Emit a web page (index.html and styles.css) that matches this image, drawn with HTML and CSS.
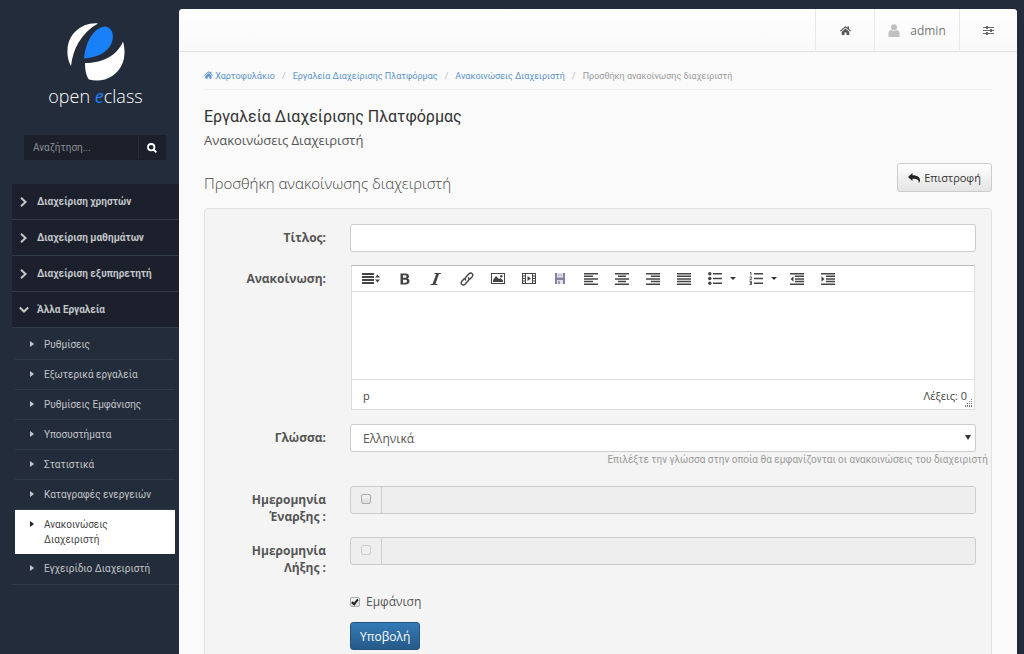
FILE: index.html
```html
<!DOCTYPE html>
<html lang="el">
<head>
<meta charset="utf-8">
<meta name="viewport" content="width=device-width, initial-scale=1">
<title>Ανακοινώσεις Διαχειριστή</title>
<link rel="stylesheet" href="styles.css">
</head>
<body>
<div class="layout">
  <aside class="sidebar">
    <a class="brand" href="#">
      <svg class="brand-mark" viewBox="0 0 58 58" aria-hidden="true">
        <path fill="#fff" d="M31 0.500C15-1 1 11 0.500 27 0 33 1.500 39 4 43 6 26 14 10 31 0.500Z"/>
        <path fill="#1a80f8" d="M17 35.500C18 22 25 5 38 3.500 44 4 47 10 45.500 17 43 28 33 34 17 35.500Z"/>
        <path fill="#fff" d="M18 40C35 40 50 33 56 18.500 60 33 56 45 46 52.500 38 58 29 58.500 22 56.500 19 53 18 46 18 40Z"/>
      </svg>
      <span class="brand-name">open <em>e</em>class</span>
    </a>
    <form class="search">
      <input class="search-input" type="text" placeholder="Αναζήτηση..." aria-label="Αναζήτηση">
      <button class="search-button" type="button" aria-label="Αναζήτηση">
        <svg width="10" height="10" viewBox="0 0 10 10" fill="none" stroke="#fff" stroke-width="1.800"><circle cx="4.200" cy="4.200" r="3.200"/><path d="M6.500 6.500l2.900 2.900"/></svg>
      </button>
    </form>
    <nav class="menu">
      <a class="menu-group" href="#"><svg class="chevron" viewBox="0 0 10 10"><path d="M2 0.800l4.500 4.200L2 9.200"/></svg>Διαχείριση χρηστών</a>
      <a class="menu-group" href="#"><svg class="chevron" viewBox="0 0 10 10"><path d="M2 0.800l4.500 4.200L2 9.200"/></svg>Διαχείριση μαθημάτων</a>
      <a class="menu-group" href="#"><svg class="chevron" viewBox="0 0 10 10"><path d="M2 0.800l4.500 4.200L2 9.200"/></svg>Διαχείριση εξυπηρετητή</a>
      <a class="menu-group" href="#"><svg class="chevron" viewBox="0 0 10 10"><path d="M0.800 2.500L5 6.500l4.200-4"/></svg>Άλλα Εργαλεία</a>
      <ul class="submenu">
        <li><a class="submenu-link" href="#">Ρυθμίσεις</a></li>
        <li><a class="submenu-link" href="#">Εξωτερικά εργαλεία</a></li>
        <li><a class="submenu-link" href="#">Ρυθμίσεις Εμφάνισης</a></li>
        <li><a class="submenu-link" href="#">Υποσυστήματα</a></li>
        <li><a class="submenu-link" href="#">Στατιστικά</a></li>
        <li><a class="submenu-link" href="#">Καταγραφές ενεργειών</a></li>
        <li><a class="submenu-link active" href="#" aria-current="page">Ανακοινώσεις Διαχειριστή</a></li>
        <li><a class="submenu-link" href="#">Εγχειρίδιο Διαχειριστή</a></li>
      </ul>
    </nav>
  </aside>

  <div class="page">
    <header class="topbar">
      <a class="top-item top-home" href="#" aria-label="Αρχική">
        <svg width="11" height="9" viewBox="0 0 22 18" fill="#555"><path d="M11 0L0 9.500l1.500 1.500L11 3l9.500 8 1.500-1.500-4-3.500V1h-3v2.500z"/><path d="M11 5l-7.500 6.300V18H9v-5h4v5h5.500v-6.700z"/></svg>
      </a>
      <a class="top-item top-user" href="#">
        <svg width="12" height="13" viewBox="0 0 13 14" fill="#c0c0c0"><circle cx="6.500" cy="3.600" r="3.300"/><path d="M0.500 14v-4c0-2 1.200-3.300 3-3.500 2 1.300 4 1.300 6 0 1.800 0.200 3 1.500 3 3.500v4z"/></svg>
        admin
      </a>
      <a class="top-item top-settings" href="#" aria-label="Ρυθμίσεις">
        <svg width="11" height="9" viewBox="0 0 11 9" fill="#666"><path d="M0 1h11v1H0zM0 4h11v1H0zM0 7h11v1H0z"/><path d="M3 0h2v3H3zM7 3h2v3H7zM3 6h2v3H3z"/></svg>
      </a>
    </header>

    <main class="content">
      <ol class="breadcrumb">
        <li><a href="#"><svg width="9" height="8" viewBox="0 0 22 18" fill="currentColor" aria-hidden="true"><path d="M11 0L0 9.500l1.500 1.500L11 3l9.500 8 1.500-1.500-4-3.500V1h-3v2.500z"/><path d="M11 5l-7.500 6.300V18H9v-5h4v5h5.500v-6.700z"/></svg> Χαρτοφυλάκιο</a></li>
        <li><a href="#">Εργαλεία Διαχείρισης Πλατφόρμας</a></li>
        <li><a href="#">Ανακοινώσεις Διαχειριστή</a></li>
        <li>Προσθήκη ανακοίνωσης διαχειριστή</li>
      </ol>
      <h1 class="title">Εργαλεία Διαχείρισης Πλατφόρμας</h1>
      <p class="subtitle">Ανακοινώσεις Διαχειριστή</p>
      <div class="action-row">
        <h2 class="section-title">Προσθήκη ανακοίνωσης διαχειριστή</h2>
        <a class="button-default" href="#">
          <svg width="12" height="10" viewBox="0 0 12 10" fill="#222" aria-hidden="true"><path d="M4.500 0v2.300C9.500 2.300 12 4.500 12 7c0 1.200-0.500 2.300-1.300 3 0.500-3-1.700-4.300-6.200-4.200v2.300L0 4z"/></svg>
          Επιστροφή
        </a>
      </div>

      <form class="panel">
        <div class="row row-title">
          <label class="label" for="title">Τίτλος:</label>
          <input class="field" id="title" type="text">
        </div>
        <div class="row row-editor">
          <label class="label" for="body">Ανακοίνωση:</label>
          <div class="editor">
            <div class="toolbar">
              <button class="tool tool-format" type="button" aria-label="Μορφή"><svg width="18" height="11" viewBox="0 0 18 11"><path d="M0 0h12v2H0zM0 3h12v2H0zM0 6h12v2H0zM0 9h12v2H0zM13 4.500l2.500-3 2.500 3zM13 6.500l2.500 3 2.500-3z"/></svg></button>
              <button class="tool" type="button" aria-label="Έντονα"><svg width="10" height="12" viewBox="0 0 10 12" fill-rule="evenodd"><path d="M0.500 0.500h5C8 0.500 9 1.800 9 3.200 9 4.500 8.200 5.300 7.400 5.600 8.800 5.900 9.500 7 9.500 8.300c0 1.900-1.300 3.200-4 3.200h-5zM3 2.300v2.500h2c1 0 1.500-0.500 1.500-1.300S6 2.300 5 2.300zM3 6.700v3h2.200c1.200 0 1.800-0.600 1.800-1.500s-0.600-1.500-1.800-1.500z"/></svg></button>
              <button class="tool" type="button" aria-label="Πλάγια"><svg width="11" height="12" viewBox="0 0 11 12"><path d="M4.500 0H11l-0.200 1H9L5.500 11h2l-0.200 1H0.500l0.200-1h1.800L6.200 1H4.300z"/></svg></button>
              <button class="tool" type="button" aria-label="Σύνδεσμος"><svg class="stroked" width="14" height="14" viewBox="0 0 14 14"><path d="M6 8.500C4.500 7 5 6 6 5l3-3.200c1.200-1.200 2.300-1 3.200-0.100s0.900 2-0.200 3.200L9.500 7.500M8 5.500C9.500 7 9 8 8 9l-3 3.200c-1.200 1.200-2.300 1-3.200 0.100s-0.900-2 0.200-3.200L4.500 6.500"/></svg></button>
              <button class="tool" type="button" aria-label="Εικόνα"><svg width="14" height="11" viewBox="0 0 14 11" fill-rule="evenodd"><path d="M0 0h14v11H0zM1 1v9h12V1z"/><path d="M2 9V7l3-4 3 3 1.500-1L12 7.500V9z"/><circle cx="10.300" cy="3.200" r="1.200"/></svg></button>
              <button class="tool" type="button" aria-label="Βίντεο"><svg width="14" height="11" viewBox="0 0 14 11" fill-rule="evenodd"><path d="M0 0h14v11H0zM4 1v9h6V1zM1 1v1.500h2V1zM1 3.500V5h2V3.500zM1 6v1.500h2V6zM1 8.500V10h2V8.500zM11 1v1.500h2V1zM11 3.500V5h2V3.500zM11 6v1.500h2V6zM11 8.500V10h2V8.500z"/><path d="M5.500 3l3.500 2.500L5.500 8z"/></svg></button>
              <button class="tool" type="button" aria-label="Αποθήκευση"><svg width="10" height="11" viewBox="0 0 10 11"><path fill="#8484a0" d="M0 0h10v11H0z"/><path fill="#e2e2ec" d="M2 0h6v4.500H2zM2 7h6v4H2z"/><path fill="#a0a0b4" d="M3 8h2v3H3zM3 1.500h4v1H3z"/></svg></button>
              <button class="tool" type="button" aria-label="Αριστερά"><svg width="14" height="12" viewBox="0 0 14 12"><path d="M0 0h14v1.500H0zM0 2.600h9v1.500H0zM0 5.200h14v1.500H0zM0 7.800h9v1.500H0zM0 10.400h14v1.500H0z"/></svg></button>
              <button class="tool" type="button" aria-label="Κέντρο"><svg width="14" height="12" viewBox="0 0 14 12"><path d="M0 0h14v1.500H0zM3 2.600h8v1.500H3zM0 5.200h14v1.500H0zM3 7.800h8v1.500H3zM0 10.400h14v1.500H0z"/></svg></button>
              <button class="tool" type="button" aria-label="Δεξιά"><svg width="14" height="12" viewBox="0 0 14 12"><path d="M0 0h14v1.500H0zM5 2.600h9v1.500H5zM0 5.200h14v1.500H0zM5 7.800h9v1.500H5zM0 10.400h14v1.500H0z"/></svg></button>
              <button class="tool" type="button" aria-label="Πλήρης στοίχιση"><svg width="14" height="12" viewBox="0 0 14 12"><path d="M0 0h14v1.500H0zM0 2.600h14v1.500H0zM0 5.200h14v1.500H0zM0 7.800h14v1.500H0zM0 10.400h14v1.500H0z"/></svg></button>
              <button class="tool tool-list" type="button" aria-label="Λίστα"><svg width="14" height="13" viewBox="0 0 14 13"><circle cx="1.800" cy="1.800" r="1.700"/><circle cx="1.800" cy="6.500" r="1.700"/><circle cx="1.800" cy="11.200" r="1.700"/><path d="M5 1h9v1.500H5zM5 5.700h9v1.500H5zM5 10.500h9V12H5z"/></svg><span class="caret"></span></button>
              <button class="tool tool-list" type="button" aria-label="Αρίθμηση"><svg width="14" height="13" viewBox="0 0 14 13"><path d="M5 1h9v1.500H5zM5 5.700h9v1.500H5zM5 10.500h9V12H5z"/><path fill="none" stroke="#444" stroke-width="0.900" d="M0.800 0.500H2v3M0.500 5h2v1.200l-1.700 1.500h2M0.500 9.400h2v1.500H1h1.500v1.600h-2"/></svg><span class="caret"></span></button>
              <button class="tool" type="button" aria-label="Μείωση εσοχής"><svg width="14" height="12" viewBox="0 0 14 12"><path d="M0 0h14v1.500H0zM5 2.600h9v1.500H5zM5 5.200h9v1.500H5zM5 7.800h9v1.500H5zM0 10.400h14v1.500H0zM3.500 3.300v5.400L0.500 6z"/></svg></button>
              <button class="tool" type="button" aria-label="Αύξηση εσοχής"><svg width="14" height="12" viewBox="0 0 14 12"><path d="M0 0h14v1.500H0zM5 2.600h9v1.500H5zM5 5.200h9v1.500H5zM5 7.800h9v1.500H5zM0 10.400h14v1.500H0zM0.500 3.300v5.400l3-2.700z"/></svg></button>
            </div>
            <textarea class="editor-area" id="body"></textarea>
            <div class="statusbar">
              <span>p</span><span>Λέξεις: 0</span>
              <svg class="grip" width="9" height="9" viewBox="0 0 9 9" fill="#777"><path d="M7 0h1v1H7zM5 2h1v1H5zM7 2h1v1H7zM3 4h1v1H3zM5 4h1v1H5zM7 4h1v1H7zM1 6h1v2H1zM3 6h1v2H3zM5 6h1v2H5zM7 6h1v2H7z"/></svg>
            </div>
          </div>
        </div>
        <div class="row row-language">
          <label class="label" for="lang">Γλώσσα:</label>
          <div>
            <div class="select-wrap"><select class="field select" id="lang"><option>Ελληνικά</option></select></div>
            <p class="help">Επιλέξτε την γλώσσα στην οποία θα εμφανίζονται οι ανακοινώσεις του διαχειριστή</p>
          </div>
        </div>
        <div class="row row-date">
          <label class="label" for="start">Ημερομηνία Έναρξης :</label>
          <div class="date-group">
            <span class="addon"><input class="check" type="checkbox" aria-label="Ενεργοποίηση ημερομηνίας έναρξης"></span>
            <input class="date-input" id="start" type="text" disabled>
          </div>
        </div>
        <div class="row row-date">
          <label class="label" for="end">Ημερομηνία Λήξης :</label>
          <div class="date-group">
            <span class="addon"><input class="check" type="checkbox" disabled aria-label="Ενεργοποίηση ημερομηνίας λήξης"></span>
            <input class="date-input" id="end" type="text" disabled>
          </div>
        </div>
        <div class="form-end">
          <label class="show"><input class="check" type="checkbox" checked>Εμφάνιση</label>
          <button class="button-primary" type="button">Υποβολή</button>
        </div>
      </form>
    </main>
  </div>
</div>
</body>
</html>
```
FILE: styles.css
```css
*, *::before, *::after { box-sizing: border-box; }

body {
  margin: 0;
  background: #232c3a;
  color: #555;
  font: 12px/17px "Open Sans", "Noto Sans", sans-serif;
}

a { color: inherit; text-decoration: none; }
h1, h2, p, ol, ul { margin: 0; padding: 0; font-weight: 400; }
ol, ul { list-style: none; }
button, input, select, textarea { font: inherit; color: inherit; margin: 0; border-radius: 0; }
svg { flex: none; }

.layout { display: flex; align-items: stretch; min-height: 100vh; }

/* Sidebar */
.sidebar { flex: none; width: 179px; padding-top: 23px; }

.brand { display: flex; flex-direction: column; align-items: center; padding-left: 12px; color: #fff; }
.brand-mark { width: 58px; height: 58px; }
.brand-name { font-size: 18px; line-height: 30px; font-weight: 300; }
.brand-name em { color: #1a80f8; font-weight: 400; }

.search { display: flex; height: 25px; margin: 24px 13px 24px 24px; background: #1b202b; border: 1px solid #1a1f29; }
.search-input { flex: 1; min-width: 0; padding: 0 8px; border: 0; background: none; font: 10px "Roboto", sans-serif; }
.search-input::placeholder { color: #8b8e94; }
.search-button { width: 27px; padding: 0; border: 0; border-left: 1px solid #282f3b; background: none; display: flex; align-items: center; justify-content: center; }

.menu { margin-left: 12px; border-bottom: 1px solid #303c4b; font-family: "Roboto", sans-serif; font-size: 10px; color: #c3c6c9; }
.menu-group { display: flex; align-items: center; gap: 8px; height: 36px; padding-left: 7px; background: #1b202c; border-bottom: 1px solid #303a48; font-weight: 700; }
.chevron { width: 10px; height: 10px; fill: none; stroke: #c5c7ca; stroke-width: 2; }
.submenu { padding: 2px 4px 1px 3px; }
.submenu-link { display: block; position: relative; padding: 7px 32px 7px 29px; line-height: 15px; border-bottom: 1px solid #303c4b; white-space: nowrap; }
.submenu-link::before { content: ""; position: absolute; left: 15px; top: 11px; border: 3px solid transparent; border-left: 4px solid #c5c7ca; border-right: 0; }
.submenu li:last-child .submenu-link { border-bottom: 0; }
.submenu-link.active { background: #fff; color: #444; white-space: normal; border-bottom: 0; }
.submenu-link.active::before { border-left-color: #222; }

/* Page */
.page { flex: 1; min-width: 0; margin: 9px 7px 0 0; background: #fafafa; border-radius: 4px 4px 0 0; overflow: hidden; }

.topbar { display: flex; justify-content: flex-end; height: 43px; background: linear-gradient(#fff, #f9f9f9); border-bottom: 1px solid #e2e2e2; }
.top-item { display: flex; align-items: center; justify-content: center; gap: 10px; border-left: 1px solid #e8e8e8; color: #777; }
.top-home { width: 59px; }
.top-user { width: 85px; }
.top-settings { width: 58px; }

.content { padding: 16px 25px 0; }

.breadcrumb { display: flex; height: 22px; border-bottom: 1px solid #eee; font: 9px/17px "Roboto", sans-serif; color: #999; white-space: nowrap; }
.breadcrumb a { color: #5a94c8; }
.breadcrumb li + li::before { content: "/"; padding: 0 7px; color: #bbb; }

.title { margin-top: 15px; font: 16px/24px "Roboto", sans-serif; color: #333; }
.subtitle { font-size: 13px; line-height: 22px; }
.action-row { display: flex; justify-content: space-between; margin-top: 12px; }
.section-title { padding-top: 8px; font: 300 15px/24px "Open Sans", "Noto Sans", sans-serif; color: #444; }
.button-default { display: flex; align-items: center; gap: 4px; height: 29px; padding: 0 10px; border: 1px solid #ccc; border-radius: 3px; background: linear-gradient(#fff, #e4e4e4); color: #333; font-size: 11px; }

.panel { margin-top: 13px; padding: 15px; border: 1px solid #e2e2e2; border-radius: 4px; background: #f4f4f4; }
.row { display: grid; grid-template-columns: 106px minmax(0, 1fr); column-gap: 24px; }
.row-title { margin-bottom: 13px; }
.row-editor { margin-bottom: 14px; }
.row-language { margin-bottom: 18px; }
.row-date { margin-bottom: 12px; }
.label { padding-top: 5px; text-align: right; font-weight: 700; color: #555; }

.field { width: 100%; height: 28px; padding: 0 12px; border: 1px solid #ccc; border-radius: 3px; background: #fff; }

.editor { margin: 0 1px; border: 1px solid #ddd; border-top-color: #bbb; background: #fff; }
.toolbar { display: flex; flex-wrap: wrap; border-bottom: 1px solid #ddd; }
.tool { display: flex; align-items: center; justify-content: center; width: 31px; height: 25px; padding: 0; border: 0; background: none; fill: #444; }
.tool-format { width: 37px; }
.tool-list { width: 41px; gap: 8px; padding-left: 4px; }
.stroked { fill: none; stroke: #444; stroke-width: 1.4px; }
.caret { border: 3px solid transparent; border-top-color: #333; border-bottom: 0; }
.editor-area { display: block; width: 100%; height: 87px; border: 0; resize: none; background: #fff; }
.statusbar { position: relative; display: flex; justify-content: space-between; height: 30px; padding: 7px 7px 0 11px; border-top: 1px solid #ddd; font-size: 11px; color: #444; }
.grip { position: absolute; right: 1px; bottom: 1px; }

.select-wrap { position: relative; }
.select { display: block; appearance: none; }
.select-wrap::after { content: ""; position: absolute; right: 5px; top: 11px; border: 3px solid transparent; border-top: 5px solid #333; border-bottom: 0; pointer-events: none; }
.help { margin-right: -12px; font-size: 10px; line-height: 16px; text-align: right; color: #999; font-family: "Roboto", sans-serif; }

.date-group { display: flex; height: 28px; border: 1px solid #ccc; border-radius: 3px; background: #eee; overflow: hidden; }
.addon { display: flex; justify-content: center; width: 31px; padding-top: 7px; border-right: 1px solid #ccc; }
.date-input { flex: 1; min-width: 0; border: 0; background: #eee; }

.check { flex: none; appearance: none; position: relative; width: 10px; height: 10px; border: 1px solid #aaa; border-radius: 2px; background: linear-gradient(#f2f2f2, #ddd); }
.check:disabled { border-color: #ccc; background: #eee; }
.check:checked::after { content: ""; position: absolute; left: 2px; top: 0; width: 4px; height: 7px; border: solid #222; border-width: 0 2px 2px 0; transform: rotate(40deg); }

.form-end { display: flex; flex-direction: column; align-items: flex-start; gap: 12px; margin: 17px 0 0 130px; }
.show { display: flex; align-items: center; gap: 6px; }
.button-primary { height: 28px; padding: 0 9px; border: 1px solid #245580; border-radius: 3px; background: linear-gradient(#337ab7, #265a88); color: #fff; }
```
